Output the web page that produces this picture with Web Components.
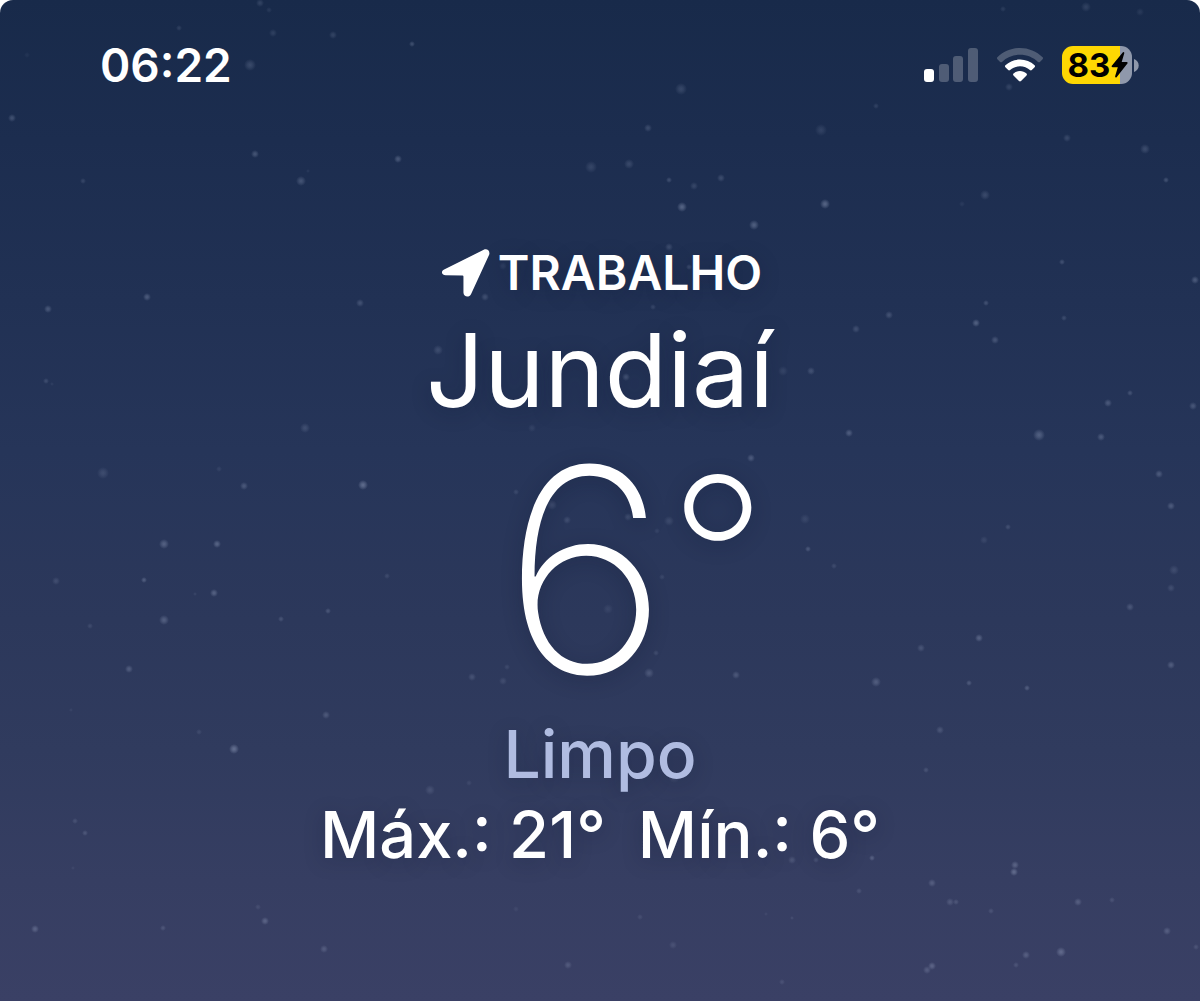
<!DOCTYPE html>
<html lang="pt-BR">
<head>
<meta charset="utf-8">
<meta name="viewport" content="width=device-width, initial-scale=1">
<title>Clima – Jundiaí</title>
<style>
  html { background: #fff; }
  body { margin: 0; font-family: Inter, "Liberation Sans", sans-serif; color: #fff; }
</style>
</head>
<body>
<weather-screen>
  <status-bar slot="status" time="06:22" battery="83"></status-bar>
  <current-weather>
    <location-label slot="label">TRABALHO</location-label>
    <span slot="city">Jundiaí</span>
    <span slot="temperature">6</span>
    <span slot="unit">°</span>
    <span slot="condition">Limpo</span>
    <span slot="high">Máx.: 21°</span>
    <span slot="low">Mín.: 6°</span>
  </current-weather>
</weather-screen>
<script>
const attach = (el, html) => { el.attachShadow({ mode: "open" }).innerHTML = html; };

/* x, y, radius, opacity of each star on a 1200 x 1001 sky */
const STARS = [
  [260,3,4,.16],[269,10,3,.1],[179,28,3,.14],[273,33,4,.14],[333,35,4,.16],[250,65,6,.2],[12,118,4,.24],[255,154,4,.26],
  [301,181,5,.25],[308,171,2,.08],[83,181,3,.16],[398,159,4,.28],[48,309,4,.26],[147,297,4,.28],[360,303,4,.22],
  [27,55,3,.06],[46,381,3,.18],[52,384,2,.08],[305,428,5,.18],[103,473,6,.16],[219,469,3,.1],[244,486,4,.24],[363,485,5,.38],
  [164,544,5,.3],[217,544,4,.32],[56,581,4,.16],[144,580,3,.28],[214,593,4,.3],[195,594,2,.1],[387,576,3,.14],
  [164,620,5,.28],[281,619,3,.2],[328,611,3,.22],[90,626,3,.14],[129,669,4,.26],[71,710,2,.08],[326,715,4,.22],
  [199,732,3,.12],[234,749,5,.38],[75,821,3,.16],[85,833,3,.2],[73,868,2,.08],[258,907,3,.12],[265,921,4,.28],
  [35,929,4,.28],[163,928,3,.18],[324,949,4,.22],
  [412,44,3,.24],[681,89,6,.18],[648,128,4,.2],[591,167,6,.16],[629,164,5,.18],[669,180,3,.22],[694,186,4,.16],
  [721,178,4,.2],[682,207,5,.36],[754,225,5,.32],[669,247,4,.18],[689,267,3,.18],[485,297,4,.2],[653,307,3,.14],
  [438,350,5,.18],[532,428,4,.1],[626,377,4,.22],[503,266,4,.1],[783,371,5,.12],[811,371,4,.14],
  [751,458,4,.26],[516,492,3,.14],[552,505,5,.16],[567,520,4,.16],[628,517,4,.16],[669,521,5,.14],[657,531,3,.1],
  [662,577,3,.12],[608,609,5,.1],[656,653,3,.14],[649,673,5,.22],[736,675,4,.22],[507,667,3,.12],[503,681,4,.14],[472,677,4,.18],
  [430,790,5,.16],[469,783,3,.1],[674,777,6,.12],[816,860,3,.16],[792,860,4,.18],[568,965,4,.2],[640,917,3,.12],
  [673,945,4,.14],[516,909,3,.08],[766,914,2,.08],
  [1009,87,4,.16],[876,106,3,.14],[821,130,6,.14],[1067,138,4,.18],[1145,149,5,.2],[1166,180,3,.24],[985,195,5,.18],
  [825,204,5,.36],[962,204,3,.08],[1062,262,3,.22],[1195,280,4,.28],[986,303,3,.22],[889,315,4,.22],[856,329,4,.2],
  [976,323,4,.32],[1064,318,3,.18],[995,340,4,.24],[811,371,4,.08],[1130,393,3,.22],[1108,403,4,.26],[1193,406,4,.24],
  [1003,9,3,.12],[1086,7,5,.15],[1140,12,4,.1],[849,433,4,.28],[1039,435,6,.3],[1101,437,4,.26],[1159,474,4,.26],
  [1171,506,4,.26],[805,519,5,.12],[808,549,3,.24],[834,566,3,.14],[984,540,4,.12],[1008,527,3,.18],[1174,570,5,.15],
  [1171,588,4,.16],[1130,607,4,.22],[979,638,4,.3],[921,648,4,.2],[876,682,5,.26],[969,683,3,.24],[1027,688,3,.26],
  [1171,665,4,.26],[940,730,4,.2],[926,770,3,.18],[872,858,3,.26],[859,891,3,.16],[932,883,4,.24],[950,902,4,.2],
  [956,902,3,.18],[991,911,3,.16],[1015,865,4,.28],[1014,872,4,.34],[1078,902,4,.24],[1112,900,3,.16],[1167,931,4,.24],
  [1196,947,3,.16],[1061,952,5,.32],[1026,955,4,.24],[1016,965,3,.16],[932,966,4,.28],[927,970,4,.22],[782,982,3,.14],[792,918,2,.12]
];

customElements.define("star-field", class extends HTMLElement {
  constructor() {
    super();
    attach(this, `
      <style>
        :host { display: block; overflow: hidden; }
        svg { display: block; width: 100%; height: 100%; }
      </style>
      <svg viewBox="0 0 1200 1001" preserveAspectRatio="xMidYMid slice" aria-hidden="true">
        <defs><radialGradient id="glow">
          <stop offset="0" stop-color="#bcc8e4"/>
          <stop offset=".4" stop-color="#bcc8e4" stop-opacity=".7"/>
          <stop offset="1" stop-color="#bcc8e4" stop-opacity="0"/>
        </radialGradient></defs>
        ${STARS.map(([x, y, r, o]) => `<circle cx="${x}" cy="${y}" r="${r}" opacity="${o}" fill="url(#glow)"/>`).join("")}
      </svg>`);
  }
});

customElements.define("signal-icon", class extends HTMLElement {
  constructor() {
    super();
    attach(this, `
      <style>:host { display: block; } svg { display: block; }</style>
      <svg width="54" height="35" viewBox="0 0 54 35" role="img" aria-label="Sinal">
        <rect x="0" y="21" width="10" height="13" rx="3" fill="#fff"/>
        <g fill="#fff" fill-opacity=".23">
          <rect x="15" y="16" width="10" height="18" rx="3"/>
          <rect x="29" y="8" width="10" height="26" rx="3"/>
          <rect x="44" y="0" width="10" height="34" rx="3"/>
        </g>
      </svg>`);
  }
});

customElements.define("wifi-icon", class extends HTMLElement {
  constructor() {
    super();
    attach(this, `
      <style>:host { display: block; } svg { display: block; }</style>
      <svg width="46" height="35" viewBox="0 0 46 35" role="img" aria-label="Wi-Fi" fill="#fff">
        <path fill-opacity=".23" d="M.4 9.2C6.400 3.400 14.400 0 23 0s16.600 3.400 22.600 9.200c.6.600.6 1.400 0 2l-2.700 2.700c-.5.500-1.300.5-1.900 0C36.200 9.400 29.900 6.800 23 6.800S9.800 9.400 5 13.900c-.6.500-1.400.5-1.900 0L.4 11.200c-.6-.6-.6-1.400 0-2z"/>
        <path d="M8.400 17.300C12.300 13.700 17.400 11.600 23 11.600s10.700 2.100 14.600 5.700c.6.600.6 1.400 0 2l-2.800 2.800c-.5.500-1.300.5-1.900 0C30.300 19.700 26.800 18.300 23 18.300s-7.300 1.400-9.900 3.800c-.6.500-1.400.5-1.900 0l-2.800-2.800c-.6-.6-.6-1.400 0-2z"/>
        <path d="M16.500 25.500c1.800-1.500 4-2.400 6.500-2.400s4.700.9 6.500 2.400c.6.500.6 1.400 0 2l-5.500 5.600c-.6.600-1.400.6-2 0l-5.500-5.600c-.6-.6-.6-1.500 0-2z"/>
      </svg>`);
  }
});

customElements.define("battery-icon", class extends HTMLElement {
  static observedAttributes = ["level"];
  constructor() {
    super();
    attach(this, `
      <style>
        :host { display: flex; align-items: center; gap: 2px; }
        .cell {
          --level: 83%;
          display: flex; align-items: center; justify-content: center; gap: 1px;
          box-sizing: border-box; width: 70px; height: 38px; padding-left: 2px; border-radius: 11px;
          background: linear-gradient(90deg, #fed702 var(--level), #8f98ab var(--level));
          color: #000; font-size: 33px; line-height: 38px; font-weight: 700;
        }
        svg { display: block; }
      </style>
      <div class="cell"><span></span><svg width="17" height="26" viewBox="0 0 17 26" aria-hidden="true"><path d="M11.700.5.800 13.700c-.6.700-.1 1.500.7 1.500h5.300L4.200 24.100c-.4 1.300.7 1.900 1.600.9L16.400 11.600c.6-.7.100-1.500-.7-1.500h-5L13.200 1.400C13.600.1 12.500-.5 11.700.5z"/></svg></div>
      <svg width="5" height="13" viewBox="0 0 5 13" aria-hidden="true"><path fill="#8f98ab" d="M0 0c2.800.9 4.700 3.400 4.700 6.500S2.800 12.100 0 13z"/></svg>`);
  }
  attributeChangedCallback(name, old, value) {
    this.shadowRoot.querySelector("span").textContent = value;
    this.shadowRoot.querySelector(".cell").style.setProperty("--level", value + "%");
  }
});

customElements.define("status-bar", class extends HTMLElement {
  connectedCallback() {
    if (this.shadowRoot) return;
    attach(this, `
      <style>
        :host { display: flex; align-items: center; justify-content: space-between; padding: 37px 61px 0 100px; }
        time { font-size: 46px; line-height: 56px; font-weight: 600; }
        .icons { display: flex; align-items: center; gap: 19px; }
      </style>
      <time>${this.getAttribute("time")}</time>
      <div class="icons">
        <signal-icon></signal-icon>
        <wifi-icon></wifi-icon>
        <battery-icon level="${this.getAttribute("battery")}"></battery-icon>
      </div>`);
  }
});

customElements.define("location-label", class extends HTMLElement {
  constructor() {
    super();
    attach(this, `
      <style>
        :host { display: flex; align-items: center; justify-content: center; gap: 8px; padding-left: 4px; font-size: 48px; line-height: 80px; font-weight: 600; }
        svg { display: block; }
      </style>
      <svg width="48" height="48" viewBox="0 0 49 49" aria-hidden="true" fill="#fff"><path d="M2.200 20.900 42.600.8c3.600-1.700 7 1.600 5.400 5.300L29.600 46.100c-1.800 4-7.700 2.900-7.700-1.600V28.100c0-.6-.4-1-1-1L3.700 26.900c-4.200 0-5.200-4.200-1.500-6z"/></svg>
      <slot></slot>`);
  }
});

customElements.define("current-weather", class extends HTMLElement {
  constructor() {
    super();
    attach(this, `
      <style>
        :host { display: flex; flex-direction: column; align-items: center; text-shadow: 0 4px 20px rgba(10, 20, 45, .25); }
        h1, p { margin: 0; white-space: nowrap; }
        h1 { font-size: 102px; line-height: 114px; font-weight: 400; }
        .temperature { display: flex; align-items: flex-start; font-size: 284px; line-height: 286px; font-weight: 200; padding-left: 70px; }
        .unit { font-size: 218px; line-height: 256px; }
        .condition { font-size: 66px; line-height: 82px; font-weight: 500; color: #b0bce1; }
        .range { display: flex; gap: 32px; font-size: 65px; line-height: 80px; font-weight: 500; }
      </style>
      <slot name="label"></slot>
      <h1><slot name="city"></slot></h1>
      <p class="temperature"><slot name="temperature"></slot><span class="unit"><slot name="unit"></slot></span></p>
      <p class="condition"><slot name="condition"></slot></p>
      <p class="range"><slot name="high"></slot><slot name="low"></slot></p>`);
  }
});

customElements.define("weather-screen", class extends HTMLElement {
  constructor() {
    super();
    attach(this, `
      <style>
        :host {
          display: flex; flex-direction: column; gap: 140px; position: relative; box-sizing: border-box;
          min-height: 100vh; padding-bottom: 40px; border-radius: 13px 13px 0 0; overflow: hidden;
          background: linear-gradient(#182a4a, #1c2d4f 14%, #213154 30%, #263559 45%, #2c385b 62%, #303b5e 75%, #363e62 88%, #3a4065);
        }
        star-field { position: absolute; inset: 0; }
        ::slotted(*) { position: relative; }
      </style>
      <star-field></star-field>
      <slot name="status"></slot>
      <slot></slot>`);
  }
});
</script>
</body>
</html>
